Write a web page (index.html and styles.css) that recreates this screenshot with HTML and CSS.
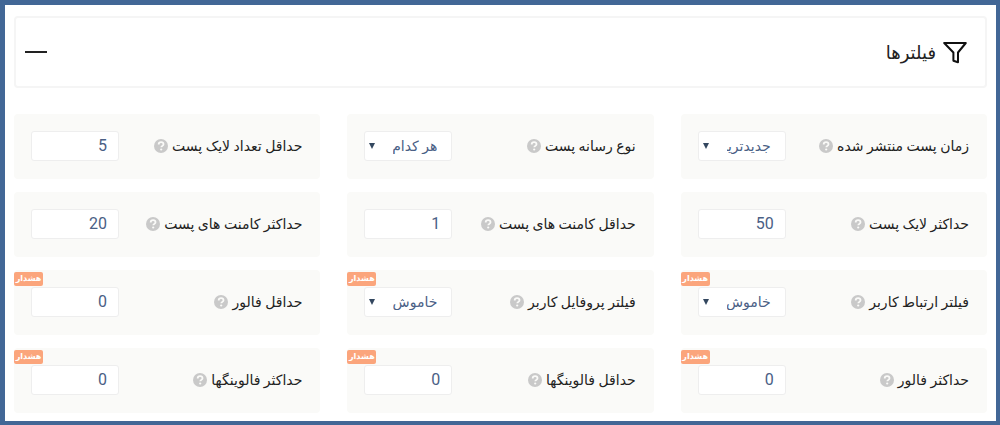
FILE: index.html
```html
<!DOCTYPE html>
<html lang="fa" dir="rtl">
<head>
  <meta charset="UTF-8">
  <meta name="viewport" content="width=device-width, initial-scale=1.0">
  <title>فیلترها</title>
  <link rel="stylesheet" href="styles.css">
</head>
<body>
  <svg class="defs" aria-hidden="true">
    <symbol id="help" viewBox="0 0 14 14">
      <circle cx="7" cy="7" r="7" fill="#c9c9c9"/>
      <path d="M4.7 5.5C4.7 4 5.7 3.2 7.1 3.2s2.4.8 2.4 2c0 1.600-2.200 1.700-2.200 3.100" fill="none" stroke="#fafaf8" stroke-width="1.800"/>
      <circle cx="7.200" cy="10.500" r="1.100" fill="#fafaf8"/>
    </symbol>
  </svg>

  <main class="panel">
    <header class="panel-header">
      <svg class="funnel" viewBox="0 0 24 23" aria-hidden="true">
        <path d="M1.200 2h21.600l-7.800 9.500v9.800l-4.600-1.600v-8.200z" fill="none" stroke="#111" stroke-width="2" stroke-linejoin="round"/>
      </svg>
      <h1>فیلترها</h1>
      <button class="collapse" type="button" aria-label="بستن"><span></span></button>
    </header>

    <form class="filters">
      <div class="filter">
        <label for="post-time">زمان پست منتشر شده</label>
        <svg class="help"><use href="#help"/></svg>
        <div class="select">
          <select id="post-time"><option>جدیدترین</option></select>
        </div>
      </div>
      <div class="filter">
        <label for="media-type">نوع رسانه پست</label>
        <svg class="help"><use href="#help"/></svg>
        <div class="select">
          <select id="media-type"><option>هر کدام</option></select>
        </div>
      </div>
      <div class="filter">
        <label for="min-likes">حداقل تعداد لایک پست</label>
        <svg class="help"><use href="#help"/></svg>
        <input id="min-likes" type="text" value="5">
      </div>

      <div class="filter">
        <label for="max-likes">حداکثر لایک پست</label>
        <svg class="help"><use href="#help"/></svg>
        <input id="max-likes" type="text" value="50">
      </div>
      <div class="filter">
        <label for="min-comments">حداقل کامنت های پست</label>
        <svg class="help"><use href="#help"/></svg>
        <input id="min-comments" type="text" value="1">
      </div>
      <div class="filter">
        <label for="max-comments">حداکثر کامنت های پست</label>
        <svg class="help"><use href="#help"/></svg>
        <input id="max-comments" type="text" value="20">
      </div>

      <div class="filter">
        <span class="badge">هشدار</span>
        <label for="relation">فیلتر ارتباط کاربر</label>
        <svg class="help"><use href="#help"/></svg>
        <div class="select">
          <select id="relation"><option>خاموش</option></select>
        </div>
      </div>
      <div class="filter">
        <span class="badge">هشدار</span>
        <label for="profile">فیلتر پروفایل کاربر</label>
        <svg class="help"><use href="#help"/></svg>
        <div class="select">
          <select id="profile"><option>خاموش</option></select>
        </div>
      </div>
      <div class="filter">
        <span class="badge">هشدار</span>
        <label for="min-followers">حداقل فالور</label>
        <svg class="help"><use href="#help"/></svg>
        <input id="min-followers" type="text" value="0">
      </div>

      <div class="filter">
        <span class="badge">هشدار</span>
        <label for="max-followers">حداکثر فالور</label>
        <svg class="help"><use href="#help"/></svg>
        <input id="max-followers" type="text" value="0">
      </div>
      <div class="filter">
        <span class="badge">هشدار</span>
        <label for="min-followings">حداقل فالوینگها</label>
        <svg class="help"><use href="#help"/></svg>
        <input id="min-followings" type="text" value="0">
      </div>
      <div class="filter">
        <span class="badge">هشدار</span>
        <label for="max-followings">حداکثر فالوینگها</label>
        <svg class="help"><use href="#help"/></svg>
        <input id="max-followings" type="text" value="0">
      </div>
    </form>
  </main>
</body>
</html>
```
FILE: styles.css
```css
* {
  box-sizing: border-box;
  margin: 0;
  padding: 0;
}

body {
  background: #fff;
  color: #222;
  font-family: Roboto, "DejaVu Sans", sans-serif;
  font-size: 14px;
}

.defs {
  display: none;
}

.panel {
  border: solid #426796;
  border-width: 5px 4px 4px 5px;
  padding: 11px 9px 8px;
}

.panel-header {
  display: flex;
  align-items: center;
  gap: 7px;
  height: 72px;
  padding: 0 18px 0 9px;
  border: 2px solid #f5f5f5;
  border-radius: 4px;
}

.panel-header h1 {
  padding-top: 2px;
  font-size: 18px;
  font-weight: 400;
  line-height: 24px;
}

.funnel {
  width: 24px;
  height: 23px;
}

.collapse {
  margin-right: auto;
  height: 24px;
  border: 0;
  background: none;
  cursor: pointer;
}

.collapse span {
  display: block;
  width: 22px;
  height: 2px;
  background: #222;
}

.filters {
  display: grid;
  grid-template-columns: repeat(3, 1fr);
  gap: 13px 27px;
  margin-top: 26px;
}

.filter {
  position: relative;
  display: flex;
  align-items: center;
  gap: 4px;
  height: 65px;
  padding: 0 18px 2px 17px;
  background: #fafaf8;
  border-radius: 4px;
}

.filter label {
  line-height: 24px;
  white-space: nowrap;
}

.help {
  flex: none;
  width: 14px;
  height: 14px;
}

.filter input,
.select {
  width: 88px;
  height: 30px;
  margin-right: auto;
}

.filter input,
.filter select {
  border: 1px solid #eee;
  border-radius: 3px;
  background: #fff;
  color: #4a6085;
  font-family: inherit;
}

.filter input {
  padding: 0 11px;
  font-size: 16px;
}

.select {
  position: relative;
}

.filter select {
  appearance: none;
  width: 100%;
  height: 100%;
  padding: 0 14px 0 28px;
  font-size: 14px;
}

.select::after {
  content: "";
  position: absolute;
  left: 5px;
  top: 12px;
  border: 3px solid transparent;
  border-top: 6px solid #33475f;
  border-bottom: 0;
  pointer-events: none;
}

.badge {
  position: absolute;
  left: 0;
  top: 2px;
  width: 29px;
  height: 14px;
  background: #fba57c;
  border-radius: 2px;
  color: #fff;
  font-size: 8px;
  font-weight: 700;
  line-height: 14px;
  text-align: center;
}
```
